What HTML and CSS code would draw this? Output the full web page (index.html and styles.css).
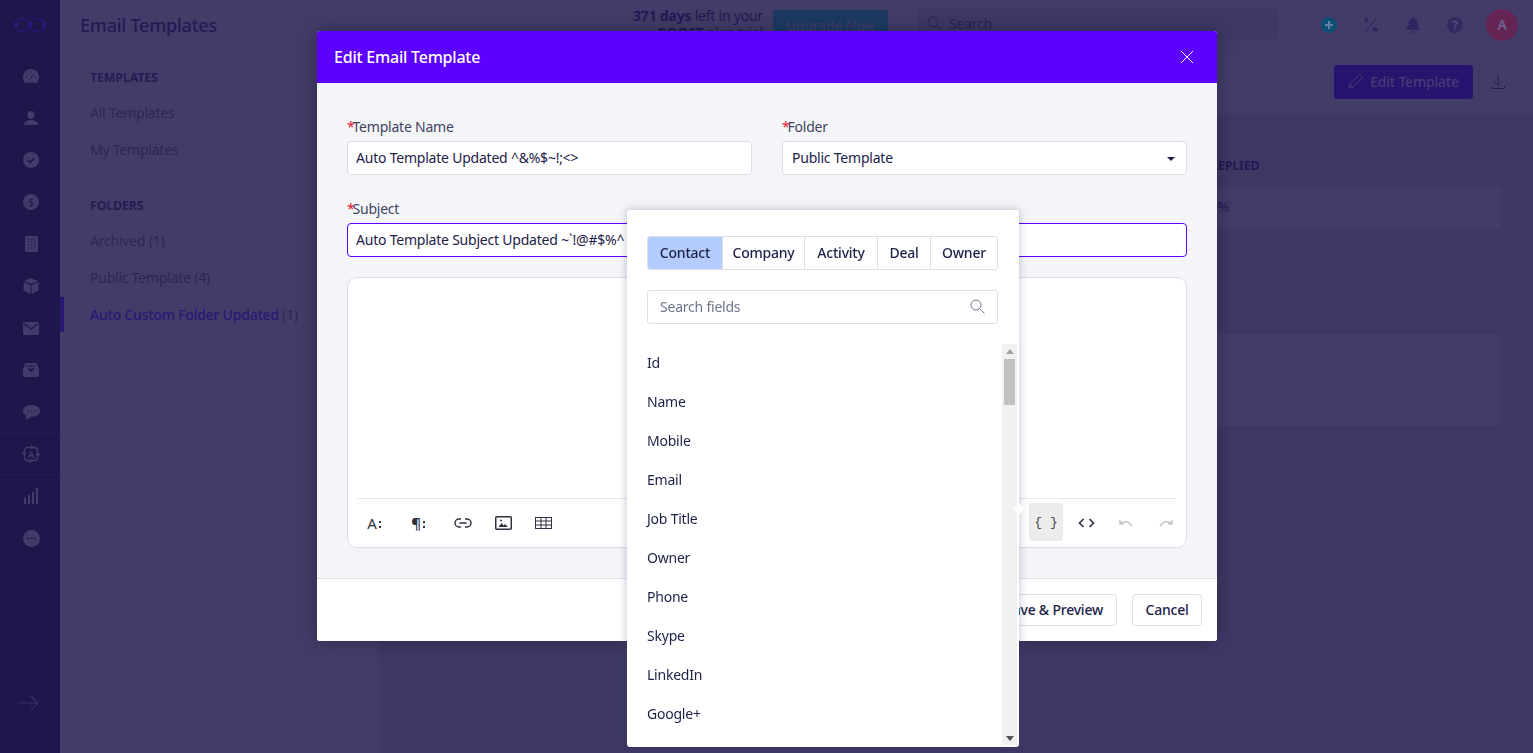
FILE: index.html
```html
<!DOCTYPE html>
<html lang="en">
<head>
    <meta charset="UTF-8">
    <meta name="viewport" content="width=device-width, initial-scale=1.0">
    <title>Email Templates</title>
    <link rel="stylesheet" href="styles.css">
</head>
<body>

<div class="app">
    <aside class="sidebar">
        <div class="logo">
            <svg width="34" height="16" viewBox="0 0 34 16" fill="none" stroke="#2b1a85" stroke-width="1.500" stroke-dasharray="2.500 1.500"><rect x="2" y="1.500" width="15" height="13" rx="6.500"/><rect x="17" y="1.500" width="15" height="13" rx="6.500"/><circle cx="3" cy="8" r="2" fill="#2b1a85" stroke="none"/><circle cx="17" cy="8" r="2" fill="#2b1a85" stroke="none"/><circle cx="31" cy="8" r="2" fill="#2b1a85" stroke="none"/></svg>
        </div>
        <nav class="side-icons">
            <a class="side-icon"><svg width="16" height="15" viewBox="0 0 16 15"><path d="M8 0a8 8 0 0 0-8 8c0 2.600 1 5 2.500 6.500 3-1.300 8-1.300 11 0C15 13 16 10.600 16 8a8 8 0 0 0-8-8z" fill="#423b69"/><path d="M7 10.500 10.500 5.500M3 8h1.500M12 8h1.500M8 2.500V4M4.500 4l1 1" stroke="#1d174c" stroke-width="1"/></svg></a>
            <a class="side-icon"><svg width="14" height="14" viewBox="0 0 14 14" fill="#423b69"><ellipse cx="7" cy="4" rx="3.500" ry="4"/><path d="M0 14c0-2.500 1-3.300 3-4l2-1h4l2 1c2 .7 3 1.500 3 4z"/></svg></a>
            <a class="side-icon"><svg width="16" height="16" viewBox="0 0 16 16"><circle cx="8" cy="8" r="8" fill="#423b69"/><path d="M4.500 8.200 7 10.500l4.500-4.500" fill="none" stroke="#1d174c" stroke-width="1.500"/></svg></a>
            <a class="side-icon"><svg width="16" height="16" viewBox="0 0 16 16"><circle cx="8" cy="8" r="8" fill="#423b69"/><text x="8" y="11.500" font-size="10" text-anchor="middle" fill="#1d174c" font-family="Noto Sans">$</text></svg></a>
            <a class="side-icon"><svg width="13" height="16" viewBox="0 0 13 16"><rect width="13" height="16" rx="1.500" fill="#423b69"/><path d="M2.500 3h8M2.500 6h8M2.500 9h8M2.500 12h8" stroke="#1d174c" stroke-width="1.200" stroke-dasharray="1.500 1.600"/></svg></a>
            <a class="side-icon"><svg width="16" height="16" viewBox="0 0 16 16" fill="#423b69"><path d="M8 0 1 3l7 3 7-3z"/><path d="M0.500 4v8.500L7.500 16V7.200z"/><path d="M15.500 4v8.500L8.500 16V7.200z"/></svg></a>
            <a class="side-icon side-sep"><svg width="16" height="13" viewBox="0 0 16 13"><rect width="16" height="13" rx="1.500" fill="#423b69"/><path d="M1 2l7 5 7-5" fill="none" stroke="#1d174c" stroke-width="1.300"/></svg></a>
            <a class="side-icon"><svg width="16" height="14" viewBox="0 0 16 14"><path d="M2.500 0h11L16 6v6.500a1.500 1.500 0 0 1-1.500 1.500h-13A1.500 1.500 0 0 1 0 12.500V6z" fill="#423b69"/><path d="M3 3h10M5 6h6l-3 2.500z" stroke="#1d174c" fill="#1d174c"/></svg></a>
            <a class="side-icon"><svg width="17" height="15" viewBox="0 0 17 15"><path d="M8.500 0C3.800 0 0 2.600 0 6c0 2 1.400 3.700 3.400 4.800L3 15l5-3.200h.5c4.700 0 8.500-2.500 8.500-5.800S13.200 0 8.500 0z" fill="#423b69"/><path d="M5 6.200h1M8 6.200h1M11 6.200h1" stroke="#1d174c" stroke-width="1.300"/></svg></a>
            <a class="side-icon side-sep side-sep-bottom"><svg width="20" height="20" viewBox="0 0 20 20" fill="none" stroke="#423b69" stroke-width="1.500"><rect x="3.500" y="3.500" width="13" height="13" rx="3"/><path d="M1 10h4l-2-2.500zM15 10h4l-2 2.500zM10 1v4l2.500-2zM10 15v4l-2.500-2z" fill="#423b69" stroke-width=".6"/><text x="10" y="13.500" font-size="9.500" font-weight="700" text-anchor="middle" fill="#423b69" stroke="none" font-family="Noto Sans">A</text></svg></a>
            <a class="side-icon"><svg width="14" height="16" viewBox="0 0 14 16" fill="#423b69"><rect x="0" y="10" width="2" height="6"/><rect x="4" y="7" width="2" height="9"/><rect x="8" y="4" width="2" height="12"/><rect x="12" y="0" width="2" height="16"/></svg></a>
            <a class="side-icon"><svg width="17" height="17" viewBox="0 0 17 17"><circle cx="8.500" cy="8.500" r="8.500" fill="#423b69"/><path d="M4 8.500h2M7.500 8.500h2M11 8.500h2" stroke="#1d174c" stroke-width="1.600"/></svg></a>
        </nav>
        <div class="side-toggle">
            <svg width="22" height="16" viewBox="0 0 22 16" fill="none" stroke="#382f62" stroke-width="1.200"><path d="M0 8h20M13 1l7 7-7 7"/></svg>
        </div>
    </aside>

    <div class="main">
        <header class="topbar">
            <h1 class="page-title">Email Templates</h1>
            <div class="trial">
                <span><b>371 days</b> left in your</span>
                <span><b>BOOST</b> plan trial</span>
            </div>
            <button class="upgrade-btn">Upgrade Now</button>
            <div class="top-search">
                <svg width="15" height="15" viewBox="0 0 15 15" fill="none" stroke="#2b2356" stroke-width="1"><circle cx="6" cy="6" r="5"/><path d="M10 10l4.500 4.500"/></svg>
                <span>Search</span>
            </div>
            <div class="top-icons">
                <svg width="16" height="16" viewBox="0 0 16 16"><circle cx="8" cy="8" r="8" fill="#0e4f73"/><path d="M8 4v8M4 8h8" stroke="#5f86a8" stroke-width="2"/></svg>
                <svg width="16" height="16" viewBox="0 0 16 16" fill="#2e2660"><path d="M1.500 1.500c0 1 .8 3 2 4.500l1.500-1-.3-2.500L2.500.5z"/><path d="M10 10.500c1-1 2-1 3 0l2 1.500c.5 1.500-.5 2.800-2 2.800-2 0-4-1.500-4-3z"/><path d="M13.500 1 2.500 15" stroke="#2e2660" stroke-width="1.200"/></svg>
                <svg width="16" height="16" viewBox="-1 0 16 16" fill="#2e2660"><path d="M7 0a1.500 1.500 0 0 0-1.500 1.500C3.500 2.300 2.500 4 2.500 6c0 4-2 5.500-2 6.500v.5h13v-.5c0-1-2-2.500-2-6.500 0-2-1-3.700-3-4.500A1.500 1.500 0 0 0 7 0z"/><path d="M5 14a2 2 0 0 0 4 0z"/></svg>
                <svg width="16" height="16" viewBox="0 0 16 16"><circle cx="8" cy="8" r="8" fill="#322b62"/><text x="8" y="12" font-size="11" font-weight="700" text-anchor="middle" fill="#534d7e" font-family="Noto Sans">?</text></svg>
                <div class="avatar">A</div>
            </div>
        </header>

        <div class="content">
            <section class="folders">
                <h4 class="folders-head">TEMPLATES</h4>
                <a class="folder-link">All Templates</a>
                <a class="folder-link">My Templates</a>
                <h4 class="folders-head folders-head-gap">FOLDERS</h4>
                <a class="folder-link">Archived <span class="count">(1)</span></a>
                <a class="folder-link">Public Template <span class="count">(4)</span></a>
                <a class="folder-link folder-active">Auto Custom Folder Updated <span class="count">(1)</span></a>
            </section>

            <section class="detail">
                <div class="detail-head">
                    <button class="edit-btn">
                        <svg width="16" height="16" viewBox="0 0 16 16" fill="none" stroke="#453c76" stroke-width="1"><path d="M1 15l1-4L11.500 1.500l3 3L5 14z"/><path d="M2 11l3 3"/></svg>
                        <span>Edit Template</span>
                    </button>
                    <button class="download-btn">
                        <svg width="16" height="16" viewBox="0 0 16 16" fill="none" stroke="#251c52" stroke-width="1"><path d="M8 1v10M4 7.500l4 4 4-4M1.500 12v2.500h13V12"/></svg>
                    </button>
                </div>
                <div class="detail-body">
                    <div class="card">
                        <div class="card-row card-row-head"><span>REPLIED</span></div>
                        <div class="card-row card-row-value"><span>0%</span></div>
                    </div>
                    <div class="card">
                        <div class="card-row card-row-short"></div>
                        <div class="card-row card-row-tall"></div>
                    </div>
                </div>
            </section>
        </div>
    </div>
</div>

<div class="modal">
    <div class="modal-header">
        <span>Edit Email Template</span>
        <svg width="14" height="14" viewBox="0 0 14 14" fill="none" stroke="#fff" stroke-width="1"><path d="M1 1l12 12M13 1 1 13"/></svg>
    </div>
    <div class="modal-body">
        <div class="form-row">
            <div class="field">
                <label><em>*</em>Template Name</label>
                <div class="input">Auto Template Updated ^&amp;%$~!;&lt;&gt;</div>
            </div>
            <div class="field">
                <label><em>*</em>Folder</label>
                <div class="input input-select">Public Template <i class="caret"></i></div>
            </div>
        </div>
        <div class="field">
            <label><em>*</em>Subject</label>
            <div class="input input-focus">Auto Template Subject Updated ~`!@#$%^</div>
        </div>
        <div class="editor">
            <div class="editor-area"></div>
            <div class="editor-tools">
                <div class="tool-group tool-group-left">
                    <button class="tool"><span class="tool-a">A</span><span class="tool-dots"></span></button>
                    <button class="tool"><span class="tool-a tool-para">¶</span><span class="tool-dots"></span></button>
                    <button class="tool"><svg width="18" height="10" viewBox="0 0 18 10" fill="none" stroke="#2f3140" stroke-width="1.500"><path d="M7 1H5a4 4 0 0 0 0 8h2M11 1h2a4 4 0 0 1 0 8h-2M5.500 5h7"/></svg></button>
                    <button class="tool"><svg width="17" height="14" viewBox="0 0 17 14"><rect x=".75" y=".75" width="15.500" height="12.500" rx="1" fill="none" stroke="#2f3140" stroke-width="1.500"/><path d="M3.500 11l3-4 2 2.500 1.500-1.500 3 3z" fill="#2f3140"/><circle cx="6" cy="4.500" r="1" fill="#2f3140"/></svg></button>
                    <button class="tool"><svg width="17" height="12" viewBox="0 0 17 12" fill="none" stroke="#2f3140" stroke-width="1"><rect x=".5" y=".5" width="16" height="11"/><path d="M.5 4h16M.5 8h16M6 .5v11M11 .5v11"/></svg></button>
                </div>
                <div class="tool-group tool-group-right">
                    <button class="tool tool-active">{ }</button>
                    <button class="tool"><svg width="17" height="10" viewBox="0 0 17 10" fill="none" stroke="#2f3140" stroke-width="1.600"><path d="M5.500 1l-4 4 4 4M11.500 1l4 4-4 4"/></svg></button>
                    <button class="tool"><svg width="16" height="9" viewBox="0 0 16 9" fill="none" stroke="#c3c5cb" stroke-width="1.500"><path d="M2 1v4h4M2 5c3-3 8-3.500 12 2"/></svg></button>
                    <button class="tool"><svg width="16" height="9" viewBox="0 0 16 9" fill="none" stroke="#c3c5cb" stroke-width="1.500"><path d="M14 1v4h-4M14 5c-3-3-8-3.500-12 2"/></svg></button>
                </div>
            </div>
        </div>
    </div>
    <div class="modal-footer">
        <button class="btn">Save &amp; Preview</button>
        <button class="btn btn-cancel">Cancel</button>
    </div>
</div>

<div class="merge-pop">
    <div class="merge-inner">
        <div class="merge-tabs">
            <a class="merge-tab merge-tab-active">Contact</a>
            <a class="merge-tab">Company</a>
            <a class="merge-tab">Activity</a>
            <a class="merge-tab">Deal</a>
            <a class="merge-tab">Owner</a>
        </div>
        <div class="merge-search">
            <span>Search fields</span>
            <svg width="15" height="15" viewBox="0 0 15 15" fill="none" stroke="#70758c" stroke-width="1"><circle cx="6" cy="6" r="5"/><path d="M10 10l4.500 4.500"/></svg>
        </div>
    </div>
    <div class="merge-list-wrap">
        <ul class="merge-list">
            <li>Id</li>
            <li>Name</li>
            <li>Mobile</li>
            <li>Email</li>
            <li>Job Title</li>
            <li>Owner</li>
            <li>Phone</li>
            <li>Skype</li>
            <li>LinkedIn</li>
            <li>Google+</li>
            <li>Twitter</li>
        </ul>
        <div class="scroll">
            <i class="scroll-up"></i>
            <div class="scroll-thumb"></div>
            <i class="scroll-down"></i>
        </div>
    </div>
    <i class="merge-arrow"></i>
</div>

</body>
</html>
```

FILE: styles.css
```css
* {
    box-sizing: border-box;
}

html, body {
    height: 100%;
}

body {
    margin: 0;
    overflow: hidden;
    font-family: "Noto Sans", Arial, sans-serif;
    font-size: 14px;
    letter-spacing: -0.22px;
    color: #1d2148;
    background: #3e3866;
}

button {
    font-family: inherit;
    letter-spacing: inherit;
}

.app {
    display: flex;
    height: 753px;
}

/* sidebar */
.sidebar {
    width: 60px;
    background: #1d174c;
    display: flex;
    flex-direction: column;
    align-items: center;
}

.logo {
    height: 50px;
    display: flex;
    align-items: center;
    justify-content: center;
    width: 100%;
}

.side-icons {
    display: flex;
    flex-direction: column;
    width: 100%;
    padding-top: 5px;
    flex: 1;
}

.side-icon {
    height: 42px;
    display: flex;
    align-items: center;
    justify-content: center;
    padding-left: 2px;
}

.side-sep {
    border-top: 1px solid #231d52;
}

.side-sep-bottom {
    border-bottom: 1px solid #231d52;
}

.side-toggle {
    height: 58px;
    padding-right: 2px;
}

/* top bar */
.main {
    flex: 1;
    display: flex;
    flex-direction: column;
    min-width: 0;
}

.topbar {
    height: 51px;
    background: #433c69;
    border-bottom: 1px solid #3f3865;
    display: flex;
    align-items: flex-start;
}

.page-title {
    margin: 13px 0 0 20px;
    width: 553px;
    font-size: 18px;
    line-height: 24px;
    font-weight: 500;
    color: #221a54;
}

.trial {
    width: 130px;
    margin-right: 10px;
    padding-top: 7px;
    font-size: 14px;
    line-height: 17px;
    color: #221a54;
    display: flex;
    flex-direction: column;
    align-items: flex-end;
    white-space: nowrap;
}

.upgrade-btn {
    width: 115px;
    height: 32px;
    margin-top: 10px;
    padding-bottom: 2px;
    border: none;
    border-radius: 3px;
    background: #1c3a63;
    color: #3f3c6c;
    font-size: 14px;
    font-weight: 500;
}

.top-search {
    width: 360px;
    height: 33px;
    margin: 8px 0 0 30px;
    padding: 0 0 2px 9px;
    background: #3f3865;
    border-radius: 3px;
    display: flex;
    align-items: center;
    gap: 7px;
    color: #2b2356;
}

.top-icons {
    display: flex;
    align-items: center;
    gap: 26px;
    margin: 9px 0 0 43px;
}

.avatar {
    width: 32px;
    height: 32px;
    margin-left: -3px;
    padding-bottom: 2px;
    border-radius: 50%;
    background: #652554;
    color: #6f628e;
    font-weight: 600;
    display: flex;
    align-items: center;
    justify-content: center;
}

/* behind the modal */
.content {
    flex: 1;
    display: flex;
    min-height: 0;
}

.folders {
    width: 320px;
    background: #433c69;
    border-right: 1px solid #3f3865;
    padding: 15px 0 0 30px;
    color: #2d2558;
}

.folders-head {
    margin: 4px 0 8px;
    font-size: 12.5px;
    line-height: 16px;
    font-weight: 700;
    color: #251c52;
}

.folders-head-gap {
    margin-top: 30px;
}

.folder-link {
    display: block;
    height: 37px;
    line-height: 37px;
    white-space: nowrap;
}

.folder-active {
    position: relative;
    color: #2a1773;
    font-weight: 500;
}

.folder-active::before {
    content: "";
    position: absolute;
    left: -30px;
    top: 1px;
    width: 4px;
    height: 35px;
    background: #2a1773;
}

.count {
    color: #2d2558;
    font-weight: 400;
}

.detail {
    flex: 1;
    min-width: 0;
}

.detail-head {
    height: 64px;
    background: #433c69;
    border-bottom: 1px solid #3f3865;
    display: flex;
    justify-content: flex-end;
    gap: 5px;
    padding: 14px 16px 0 0;
}

.edit-btn {
    width: 139px;
    height: 34px;
    padding: 0 0 2px;
    border: none;
    border-radius: 3px;
    background: #28146e;
    color: #453c76;
    font-size: 14px;
    font-weight: 500;
    display: flex;
    align-items: center;
    justify-content: center;
    gap: 6px;
}

.download-btn {
    width: 39px;
    height: 34px;
    background: transparent;
    border: 1px solid #3f3865;
    border-radius: 3px;
    display: flex;
    align-items: center;
    justify-content: center;
}

.detail-body {
    padding: 30px 31px 0 20px;
    display: flex;
    flex-direction: column;
    gap: 31px;
}

.card {
    border: 1px solid #3d3663;
    border-radius: 3px;
    background: #433c69;
}

.card-row {
    display: flex;
    align-items: center;
    padding-left: 809px;
    color: #221a54;
}

.card-row-head {
    height: 41px;
    padding-bottom: 2px;
    background: #3f3865;
    font-size: 12.5px;
    font-weight: 700;
    border-bottom: 1px solid #3d3663;
}

.card-row-value {
    height: 42px;
    padding-bottom: 4px;
    font-size: 14px;
}

.card-row-short {
    height: 72px;
    border-bottom: 1px solid #3d3663;
    background: #3f3865;
}

.card-row-tall {
    height: 92px;
}

/* modal */
.modal {
    position: fixed;
    left: 317px;
    top: 31px;
    width: 900px;
    height: 610px;
    display: flex;
    flex-direction: column;
    border-radius: 3px;
    overflow: hidden;
    background: #fff;
    box-shadow: 0 0 20px rgba(0, 0, 0, 0.3);
}

.modal-header {
    height: 52px;
    flex-shrink: 0;
    background: #5c00ff;
    color: #fff;
    font-size: 16px;
    font-weight: 500;
    display: flex;
    align-items: center;
    justify-content: space-between;
    padding: 0 23px 0 17px;
}

.modal-body {
    height: 496px;
    flex-shrink: 0;
    background: #f4f5f8;
    border-bottom: 1px solid #dfe2ea;
    padding: 34px 30px 0;
    display: flex;
    flex-direction: column;
}

.form-row {
    display: flex;
    gap: 30px;
}

.form-row .field {
    flex: 1;
}

.field {
    margin-bottom: 24px;
}

.field label {
    display: block;
    height: 20px;
    line-height: 20px;
    color: #3f4361;
}

.field em {
    margin-right: -2px;
    color: #e6172b;
    font-style: normal;
}

.input {
    height: 34px;
    line-height: 31px;
    margin-top: 4px;
    padding: 0 8px;
    background: #fff;
    border: 1px solid #d9dde6;
    border-radius: 4px;
    color: #1d2148;
    position: relative;
    white-space: nowrap;
}

.input-select {
    padding-left: 9px;
}

.input-focus {
    border-color: #5c00ff;
}

.caret {
    position: absolute;
    right: 11px;
    top: 15px;
    border: 4px solid transparent;
    border-top-color: #1d2148;
    border-bottom: 0;
}

.editor {
    height: 271px;
    margin-top: -4px;
    background: #fff;
    border: 1px solid #d9dde6;
    border-radius: 10px;
    padding: 0 10px;
    display: flex;
    flex-direction: column;
}

.editor-area {
    height: 221px;
    border-bottom: 1px solid #e6e8ee;
}

.editor-tools {
    display: flex;
    justify-content: space-between;
    padding-top: 4px;
}

.tool-group {
    display: flex;
    gap: 6px;
}

.tool-group-left {
    margin-left: -1px;
}

.tool-group-left .tool {
    padding-top: 2px;
}

.tool-group-left .tool:nth-child(2) {
    margin-left: 4px;
}

.tool-group-left .tool:nth-child(3) {
    margin-left: 5px;
}

.tool-group-right {
    margin-right: -7px;
}

.tool {
    width: 34px;
    height: 38px;
    border: none;
    background: transparent;
    padding: 0;
    border-radius: 3px;
    font-size: 14px;
    color: #2f3140;
    display: flex;
    align-items: center;
    justify-content: center;
}

.tool-active {
    background: #ececed;
    font-family: "Liberation Mono", monospace;
    letter-spacing: 0;
    font-size: 13px;
    color: #45474f;
}

.tool-group-right .tool svg {
    margin-top: 2px;
}

.tool-a {
    font-size: 15px;
    font-weight: 400;
}

.tool-para {
    font-weight: 600;
}

.tool-dots {
    width: 2px;
    height: 8px;
    margin-left: 2px;
    margin-top: 3px;
    background: linear-gradient(#2f3140 0 2px, transparent 2px 5px, #2f3140 5px 7px, transparent 7px);
}

.modal-footer {
    flex: 1;
    display: flex;
    justify-content: flex-end;
    align-items: center;
    gap: 15px;
    padding: 0 15px;
    background: #fff;
}

.btn {
    height: 32px;
    padding: 0 13px 2px;
    background: #fff;
    border: 1px solid #d9dde6;
    border-radius: 4px;
    color: #1d2148;
    font-size: 14px;
    font-weight: 500;
}

.btn-cancel {
    width: 70px;
    padding-left: 0;
    padding-right: 0;
}

/* merge fields popover */
.merge-pop {
    position: fixed;
    left: 627px;
    top: 210px;
    width: 392px;
    height: 537px;
    background: #fff;
    border-radius: 3px;
    box-shadow: 0 0 10px rgba(50, 60, 100, 0.3);
    display: flex;
    flex-direction: column;
}

.merge-inner {
    padding: 26px 21px 0 20px;
}

.merge-tabs {
    display: flex;
    height: 34px;
    border: 1px solid #dcdfe7;
    border-radius: 3px;
    overflow: hidden;
}

.merge-tab {
    line-height: 31px;
    text-align: center;
    font-weight: 500;
    border-left: 1px solid #dcdfe7;
    color: #1d2148;
}

.merge-tab:nth-child(1) { width: 74px; border-left: none; }
.merge-tab:nth-child(2) { width: 82px; }
.merge-tab:nth-child(3) { width: 73px; }
.merge-tab:nth-child(4) { width: 53px; }
.merge-tab:nth-child(5) { flex: 1; }

.merge-tab-active {
    background: #b5ccff;
}

.merge-search {
    height: 34px;
    margin-top: 20px;
    padding: 0 12px 2px;
    border: 1px solid #dcdfe7;
    border-radius: 3px;
    display: flex;
    align-items: center;
    justify-content: space-between;
    color: #70758c;
}

.merge-list-wrap {
    flex: 1;
    min-height: 0;
    margin-top: 20px;
    display: flex;
    overflow: hidden;
    justify-content: space-between;
}

.merge-list {
    list-style: none;
    margin: -1px 0 0;
    padding: 0 0 0 20px;
}

.merge-list li {
    height: 39px;
    line-height: 39px;
}

.scroll {
    width: 15px;
    margin: 0 2px 2px 0;
    background: #f1f1f1;
    display: flex;
    flex-direction: column;
    align-items: center;
    position: relative;
}

.scroll-up {
    margin-top: 5px;
    border: 4px solid transparent;
    border-top: 0;
    border-bottom: 5px solid #a3a3a3;
}

.scroll-thumb {
    width: 11px;
    height: 46px;
    margin-top: 5px;
    background: #c1c1c1;
}

.scroll-down {
    position: absolute;
    bottom: 4px;
    border: 4px solid transparent;
    border-bottom: 0;
    border-top: 5px solid #505050;
}

.merge-arrow {
    position: absolute;
    right: -4px;
    top: 295px;
    width: 8px;
    height: 8px;
    background: #fff;
    transform: rotate(45deg);
}
```
